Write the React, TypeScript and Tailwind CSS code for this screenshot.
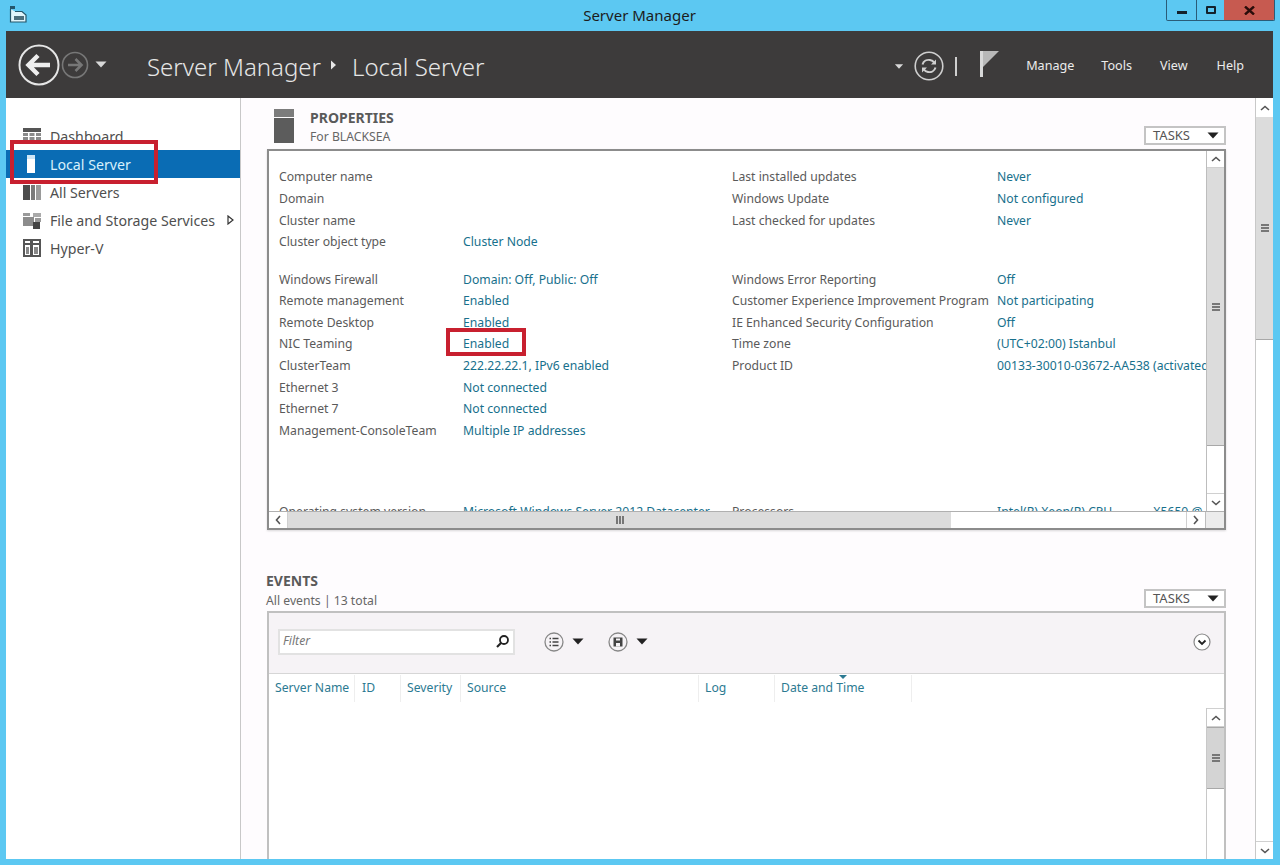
import React from 'react';

const FONT = 'font-["Noto_Sans","Open_Sans",sans-serif]';

function Caret({ className = '' }: { className?: string }) {
  return (
    <svg width="12" height="7" viewBox="0 0 12 7" className={className}>
      <path d="M0.5 0.5H11.5L6 6.5Z" fill="currentColor" />
    </svg>
  );
}

function ArrowUp() {
  return (
    <svg width="10" height="6" viewBox="0 0 10 6">
      <path d="M1 5L5 1.5L9 5" fill="none" stroke="#555" strokeWidth="1.6" />
    </svg>
  );
}

function ArrowDown() {
  return (
    <svg width="10" height="6" viewBox="0 0 10 6">
      <path d="M1 1L5 4.5L9 1" fill="none" stroke="#555" strokeWidth="1.6" />
    </svg>
  );
}

function Grip({ vertical = true }: { vertical?: boolean }) {
  return (
    <div className={vertical ? 'flex flex-col gap-[1px]' : 'flex gap-[1px]'}>
      <div className={vertical ? 'w-[8px] h-[2px] bg-[#777]' : 'w-[2px] h-[8px] bg-[#777]'} />
      <div className={vertical ? 'w-[8px] h-[2px] bg-[#777]' : 'w-[2px] h-[8px] bg-[#777]'} />
      <div className={vertical ? 'w-[8px] h-[2px] bg-[#777]' : 'w-[2px] h-[8px] bg-[#777]'} />
    </div>
  );
}

function TasksButton() {
  return (
    <div className="w-[82px] h-[19px] border-2 border-[#c4c4c4] bg-white flex items-center justify-between pl-[7px] pr-[5px]">
      <span className="text-[13px] text-[#555] leading-none">TASKS</span>
      <Caret className="text-[#222]" />
    </div>
  );
}

const topLeft = [
  ['Computer name', ''],
  ['Domain', ''],
  ['Cluster name', ''],
  ['Cluster object type', 'Cluster Node'],
];
const topRight = [
  ['Last installed updates', 'Never'],
  ['Windows Update', 'Not configured'],
  ['Last checked for updates', 'Never'],
  ['', ''],
];
const midLeft = [
  ['Windows Firewall', 'Domain: Off, Public: Off'],
  ['Remote management', 'Enabled'],
  ['Remote Desktop', 'Enabled'],
  ['NIC Teaming', 'Enabled'],
  ['ClusterTeam', '222.22.22.1, IPv6 enabled'],
  ['Ethernet 3', 'Not connected'],
  ['Ethernet 7', 'Not connected'],
  ['Management-ConsoleTeam', 'Multiple IP addresses'],
];
const midRight = [
  ['Windows Error Reporting', 'Off'],
  ['Customer Experience Improvement Program', 'Not participating'],
  ['IE Enhanced Security Configuration', 'Off'],
  ['Time zone', '(UTC+02:00) Istanbul'],
  ['Product ID', '00133-30010-03672-AA538 (activated)'],
];

function PropRows({ rows, labelWidth }: { rows: string[][]; labelWidth: string }) {
  return (
    <div className="flex flex-col">
      {rows.map(([label, value], i) => (
        <div key={i} className="flex h-[21.6px] items-center whitespace-nowrap">
          <span className={`${labelWidth} shrink-0 text-[#5a5a5a]`}>{label}</span>
          <span className="text-[#17708c]">{value}</span>
        </div>
      ))}
    </div>
  );
}

function SideIcon({ name }: { name: string }) {
  if (name === 'Dashboard') {
    return (
      <svg width="18" height="16" viewBox="0 0 18 16">
        <rect x="0" y="0" width="18" height="4" fill="#555" />
        <path d="M0 5h5v3H0zM6.500 5h5v3h-5zM13 5h5v3h-5zM0 9h5v3H0zM6.500 9h5v3h-5zM13 9h5v3h-5zM0 13h5v3H0zM6.500 13h5v3h-5zM13 13h5v3h-5z" fill="#8b8b8b" />
      </svg>
    );
  }
  if (name === 'Local Server') {
    return (
      <svg width="18" height="18" viewBox="0 0 18 18">
        <rect x="4" y="0" width="8" height="4" fill="#cfe6f6" />
        <rect x="4" y="4" width="8" height="14" fill="#fff" />
      </svg>
    );
  }
  if (name === 'All Servers') {
    return (
      <svg width="18" height="16" viewBox="0 0 18 16">
        <rect x="0" y="1" width="7" height="15" fill="#4d4d4d" />
        <rect x="8" y="1" width="4" height="15" fill="#7a7a7a" />
        <rect x="13" y="1" width="5" height="15" fill="#9a9a9a" />
      </svg>
    );
  }
  if (name === 'File and Storage Services') {
    return (
      <svg width="18" height="17" viewBox="0 0 18 17">
        <rect x="0" y="1" width="7" height="3" fill="#9a9a9a" />
        <rect x="0" y="5" width="11" height="9" fill="#8c8c8c" />
        <rect x="10" y="1" width="8" height="4" fill="#aaa" />
        <rect x="12" y="6" width="6" height="4" fill="#999" />
        <rect x="10" y="10" width="7" height="7" fill="#444" />
      </svg>
    );
  }
  return (
    <svg width="18" height="18" viewBox="0 0 18 18">
      <rect x="1" y="1" width="7" height="16" fill="none" stroke="#555" strokeWidth="2" />
      <rect x="9" y="1" width="8" height="16" fill="none" stroke="#555" strokeWidth="2" />
      <rect x="3" y="8" width="3" height="7" fill="#888" />
      <rect x="11" y="8" width="4" height="7" fill="#888" />
      <rect x="2" y="4" width="15" height="2" fill="#555" />
    </svg>
  );
}

function Sidebar() {
  const items = ['Dashboard', 'Local Server', 'All Servers', 'File and Storage Services', 'Hyper-V'];
  return (
    <div className="relative w-[235px] shrink-0 bg-white border-r border-[#c8c8c8] pt-[24px]">
      {items.map(item => {
        const active = item === 'Local Server';
        return (
          <div
            key={item}
            className={`h-[28px] flex items-center pl-[17px] pr-[6px] whitespace-nowrap text-[14.2px] ${active ? 'bg-[#0a6cb4] text-[#d8f0fb]' : 'text-[#4f4f4f]'}`}
          >
            <span className="w-[27px] shrink-0 flex items-center"><SideIcon name={item} /></span>
            <span className="flex-1 pt-[1px]">{item}</span>
            {item.startsWith('File') && (
              <svg width="7" height="10" viewBox="0 0 7 10">
                <path d="M1 1L6 5L1 9Z" fill="#fff" stroke="#333" strokeWidth="1.2" />
              </svg>
            )}
          </div>
        );
      })}
      <div className="absolute left-[4px] top-[42px] w-[148px] h-[44px] border-[4px] border-[#c8202f]" />
    </div>
  );
}

function PropertiesBox() {
  return (
    <div className="h-[381px] border-2 border-[#8c8c8c] bg-white flex flex-col shadow-[0_1px_2px_rgba(0,0,0,0.15)]">
      <div className="flex-1 min-h-0 flex">
        <div className="relative flex-1 min-w-0 overflow-hidden pl-[10px] pt-[15.7px] text-[12.2px]">
          <div className="flex">
            <div className="w-[453px] shrink-0"><PropRows rows={topLeft} labelWidth="w-[184px]" /></div>
            <div className="flex-1"><PropRows rows={topRight} labelWidth="w-[265px]" /></div>
          </div>
          <div className="flex mt-[16px]">
            <div className="w-[453px] shrink-0"><PropRows rows={midLeft} labelWidth="w-[184px]" /></div>
            <div className="flex-1"><PropRows rows={midRight} labelWidth="w-[265px]" /></div>
          </div>
          <div className="flex mt-[60px]">
            <div className="w-[453px] shrink-0">
              <PropRows rows={[['Operating system version', 'Microsoft Windows Server 2012 Datacenter']]} labelWidth="w-[184px]" />
            </div>
            <div className="flex-1">
              <PropRows rows={[['Processors', 'Intel(R) Xeon(R) CPU\u00a0\u00a0\u00a0\u00a0\u00a0\u00a0\u00a0\u00a0\u00a0\u00a0\u00a0\u00a0\u00a0X5650 @']]} labelWidth="w-[265px]" />
            </div>
          </div>
          <div className="absolute left-[177px] top-[177px] w-[80px] h-[28px] border-[4px] border-[#c8202f]" />
        </div>
        <div className="w-[18px] shrink-0 flex flex-col border-l border-[#bdbdbd]">
          <div className="h-[17px] bg-white flex items-center justify-center border-b border-[#d0d0d0]"><ArrowUp /></div>
          <div className="h-[278px] bg-[#dcdcdc] border-b border-[#a8a8a8] flex items-center justify-center"><Grip /></div>
          <div className="flex-1 bg-white" />
          <div className="h-[18px] bg-white flex items-center justify-center border-t border-[#d0d0d0]"><ArrowDown /></div>
        </div>
      </div>
      <div className="h-[17px] shrink-0 flex border-t border-[#b0b0b0]">
        <div className="w-[19px] bg-white flex items-center justify-center border-r border-[#d0d0d0]">
          <span className="-rotate-90 flex"><ArrowUp /></span>
        </div>
        <div className="w-[663px] bg-[#dcdcdc] flex items-center justify-center"><Grip vertical={false} /></div>
        <div className="flex-1 bg-white" />
        <div className="w-[19px] bg-white flex items-center justify-center border-l border-[#d0d0d0]">
          <span className="rotate-90 flex"><ArrowUp /></span>
        </div>
        <div className="w-[19px] bg-[#ececec] border-l border-[#bdbdbd]" />
      </div>
    </div>
  );
}

function EventsBox() {
  const cols = [
    ['Server Name', 'w-[86px] pl-[6px]'],
    ['ID', 'w-[46px] pl-[7px]'],
    ['Severity', 'w-[60px] pl-[6px]'],
    ['Source', 'w-[238px] pl-[6px]'],
    ['Log', 'w-[76px] pl-[6px]'],
    ['Date and Time', 'w-[137px] pl-[6px]'],
  ];
  return (
    <div className="flex-1 min-h-0 border-x-2 border-t-2 border-[#c0c0c0] bg-white flex flex-col">
      <div className="h-[61px] shrink-0 bg-[#f6f3f6] border-b border-[#d6d6d6] flex items-center pl-[9px] pr-[13px] pb-[3px]">
        <div className="w-[237px] h-[26px] bg-white border-2 border-[#e2e2e2] flex items-center justify-between pl-[3px] pr-[3px]">
          <span className="text-[12.2px] italic text-[#777]">Filter</span>
          <svg width="15" height="15" viewBox="0 0 15 15">
            <circle cx="9" cy="6" r="4" fill="none" stroke="#222" strokeWidth="1.8" />
            <path d="M6 9L2 13" stroke="#222" strokeWidth="2.2" />
          </svg>
        </div>
        <div className="ml-[29px] flex items-center gap-[8px]">
          <svg width="20" height="20" viewBox="0 0 20 20">
            <circle cx="10" cy="10" r="9" fill="none" stroke="#888" strokeWidth="1.3" />
            <path d="M5.500 6.500h1.500M5.500 10h1.500M5.500 13.500h1.500M8.500 6.500h6M8.500 10h6M8.500 13.500h6" stroke="#444" strokeWidth="1.600" />
          </svg>
          <Caret className="text-[#222]" />
        </div>
        <div className="ml-[24px] flex items-center gap-[8px]">
          <svg width="20" height="20" viewBox="0 0 20 20">
            <circle cx="10" cy="10" r="9" fill="none" stroke="#888" strokeWidth="1.3" />
            <path d="M5.500 5.500h9v9h-9z" fill="#444" />
            <rect x="8" y="6.500" width="4" height="2" fill="#f6f3f6" />
            <rect x="8" y="11" width="4" height="3.500" fill="#f6f3f6" />
          </svg>
          <Caret className="text-[#222]" />
        </div>
        <svg width="18" height="18" viewBox="0 0 18 18" className="ml-auto">
          <circle cx="9" cy="9" r="8" fill="#fff" stroke="#888" strokeWidth="1.2" />
          <path d="M5.500 7.500L9 11L12.500 7.500" fill="none" stroke="#222" strokeWidth="1.800" />
        </svg>
      </div>
      <div className="h-[27px] shrink-0 flex mt-[1px] relative">
        {cols.map(([name, w]) => (
          <div key={name} className={`${w} h-full flex items-center border-r border-[#eeeeee] text-[12.2px] text-[#2c7a92] whitespace-nowrap`}>
            {name}
          </div>
        ))}
        <svg width="8" height="4" viewBox="0 0 8 4" className="absolute left-[570px] top-0">
          <path d="M0 0H8L4 4Z" fill="#2c7a92" />
        </svg>
      </div>
      <div className="flex-1 min-h-0 flex justify-end pt-[6px]">
        <div className="w-[18px] flex flex-col border-l border-[#c8c8c8]">
          <div className="h-[19px] flex items-center justify-center border-b border-t border-[#d0d0d0] bg-white"><ArrowUp /></div>
          <div className="h-[62px] bg-[#d4d4d4] border-y border-[#a8a8a8] flex items-center justify-center"><Grip /></div>
          <div className="flex-1 bg-white" />
        </div>
      </div>
    </div>
  );
}

function Header() {
  return (
    <div className="h-[67px] shrink-0 bg-[#3d3b3b] flex items-center">
      <svg width="42" height="42" viewBox="0 0 42 42" className="ml-[12px] shrink-0">
        <circle cx="21" cy="21" r="19.500" fill="none" stroke="#e6e6e6" strokeWidth="2" />
        <path d="M32 21H11M20 11.500L10.500 21L20 30.500" fill="none" stroke="#eeeeee" strokeWidth="4.500" />
      </svg>
      <svg width="28" height="28" viewBox="0 0 28 28" className="ml-[1px] shrink-0">
        <circle cx="14" cy="14" r="12.500" fill="none" stroke="#777" strokeWidth="1.600" />
        <path d="M7 14H20M14.500 8L20.500 14L14.500 20" fill="none" stroke="#777" strokeWidth="2.600" />
      </svg>
      <Caret className="ml-[6px] text-[#d8d8d8] shrink-0" />
      <span className="ml-[40px] mt-[5px] text-[24px] text-[#e6e6e6] font-light leading-none whitespace-nowrap">Server Manager</span>
      <svg width="7" height="10" viewBox="0 0 7 10" className="ml-[9px] shrink-0">
        <path d="M1 0.500L6 5L1 9.500Z" fill="#e6e6e6" />
      </svg>
      <span className="ml-[15px] mt-[5px] text-[24px] text-[#e6e6e6] font-light leading-none whitespace-nowrap">Local Server</span>
      <div className="ml-auto flex items-center pt-[3px]">
        <Caret className="text-[#d8d8d8] scale-75" />
        <svg width="30" height="30" viewBox="0 0 30 30" className="ml-[9px]">
          <circle cx="15" cy="15" r="13.800" fill="none" stroke="#cfcfcf" strokeWidth="1.600" />
          <path d="M8.500 13.500C9.500 10 13 8.500 16 9C18 9.300 19.500 10.500 20.500 12M21.500 16.500C20.500 20 17 21.500 14 21C12 20.700 10.500 19.500 9.500 18" fill="none" stroke="#cfcfcf" strokeWidth="2" />
          <path d="M22 8.500V13.500H17ZM8 21.500V16.500H13Z" fill="#cfcfcf" />
        </svg>
        <div className="ml-[11px] w-[2px] h-[19px] bg-[#cfcfcf]" />
        <svg width="21" height="27" viewBox="0 0 21 27" className="ml-[22px] -mt-[6px]">
          <rect x="1" y="1" width="3" height="26" fill="#d8d8d8" />
          <path d="M4 1H20L4 17Z" fill="#b8b8b8" />
        </svg>
        <div className="ml-[26px] mr-[29px] flex text-[12.6px] text-[#ececec] whitespace-nowrap">
          <span>Manage</span>
          <span className="ml-[27px]">Tools</span>
          <span className="ml-[28px]">View</span>
          <span className="ml-[29px]">Help</span>
        </div>
      </div>
    </div>
  );
}

export default function App() {
  return (
    <div className={`${FONT} w-[1280px] h-[865px] overflow-hidden bg-[#5cc8f2] flex flex-col`}>
      <div className="h-[31px] shrink-0 relative flex items-center justify-center">
        <svg width="18" height="18" viewBox="0 0 18 18" className="absolute left-[9px] top-[5px]">
          <rect x="1" y="1" width="5" height="3" fill="#24566b" />
          <path d="M1.500 4V17H17V10L13 6.500H6" fill="#dff4fb" stroke="#24566b" strokeWidth="1.200" />
          <rect x="5" y="11" width="10" height="4" fill="#4b6e7c" />
        </svg>
        <span className="text-[15px] text-[#1c1c1c] -ml-[1px]">Server Manager</span>
        <div className="absolute right-[5px] top-0 h-[21px] flex border-x border-b border-[#2a5c78] rounded-b-[2px] overflow-hidden">
          <div className="w-[30px] flex items-center justify-center border-r border-[#2a5c78]">
            <div className="w-[10px] h-[3px] bg-[#14222c] mt-[4px]" />
          </div>
          <div className="w-[27px] flex items-center justify-center">
            <div className="w-[10px] h-[8px] border-2 border-[#14222c] rounded-[1px]" />
          </div>
          <div className="w-[50px] bg-[#c75a50] flex items-center justify-center">
            <svg width="11" height="9" viewBox="0 0 11 9">
              <path d="M1 0.500L10 8.500M10 0.500L1 8.500" stroke="#2a0d0a" strokeWidth="2.400" />
            </svg>
          </div>
        </div>
      </div>

      <div className="flex-1 min-h-0 ml-[6px] mr-[7px] mb-[6px] flex flex-col">
        <Header />
        <div className="flex-1 min-h-0 flex bg-[#fefcfe]">
          <Sidebar />
          <div className="flex-1 min-w-0 flex flex-col pl-[26px] pr-[29px]">
            <div className="h-[51px] shrink-0 flex">
              <svg width="20" height="34" viewBox="0 0 20 34" className="ml-[7px] mt-[11px] shrink-0">
                <rect width="20" height="8" fill="#7c7c7c" />
                <rect y="9" width="20" height="25" fill="#5c5c5c" />
              </svg>
              <div className="ml-[16px] flex flex-col pt-[10px]">
                <span className="text-[14px] font-bold text-[#5a5a5a] leading-[19px]">PROPERTIES</span>
                <span className="text-[12.2px] text-[#666] leading-[18px] mt-[1px]">For BLACKSEA</span>
              </div>
              <div className="ml-auto mt-[28px]"><TasksButton /></div>
            </div>
            <PropertiesBox />
            <div className="h-[81px] shrink-0 flex items-end pb-[3px] justify-between">
              <div className="flex flex-col -ml-[1px] -mb-[2px]">
                <span className="text-[14px] font-bold text-[#5a5a5a] leading-[20px]">EVENTS</span>
                <span className="text-[12.2px] text-[#666] leading-[18px] mt-[1px]">All events | 13 total</span>
              </div>
              <TasksButton />
            </div>
            <EventsBox />
          </div>
          <div className="w-[18px] shrink-0 bg-white border-l border-[#c8c8c8] flex flex-col">
            <div className="h-[19px] flex items-center justify-center"><ArrowUp /></div>
            <div className="h-[223px] bg-[#dcdcdc] border-b border-[#a8a8a8] flex items-center justify-center"><Grip /></div>
            <div className="flex-1" />
            <div className="h-[18px] flex items-center justify-center border-t border-[#d0d0d0]"><ArrowDown /></div>
          </div>
        </div>
      </div>
    </div>
  );
}
